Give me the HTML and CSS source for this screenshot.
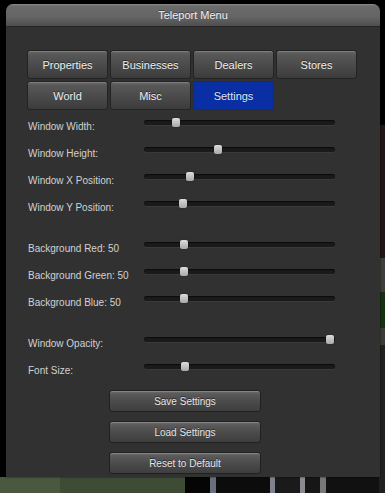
FILE: index.html
```html
<!DOCTYPE html>
<html lang="en">
<head>
  <meta charset="UTF-8" />
  <title>Teleport Menu</title>
  <link rel="stylesheet" href="styles.css">
</head>
<body>
  <div class="window">
    <div class="titlebar">Teleport Menu</div>
    <div class="content">
      <div class="tabs">
        <div class="tab">Properties</div>
        <div class="tab">Businesses</div>
        <div class="tab">Dealers</div>
        <div class="tab">Stores</div>
        <div class="tab">World</div>
        <div class="tab">Misc</div>
        <div class="tab active">Settings</div>
      </div>

      <div class="settings">
        <div class="row"><span class="label">Window Width:</span><div class="track"><div class="thumb" style="left: 16.8%"></div></div></div>
        <div class="row"><span class="label">Window Height:</span><div class="track"><div class="thumb" style="left: 38.7%"></div></div></div>
        <div class="row"><span class="label">Window X Position:</span><div class="track"><div class="thumb" style="left: 24%"></div></div></div>
        <div class="row"><span class="label">Window Y Position:</span><div class="track"><div class="thumb" style="left: 20.4%"></div></div></div>
        <div class="spacer"></div>
        <div class="row"><span class="label">Background Red: 50</span><div class="track"><div class="thumb" style="left: 21%"></div></div></div>
        <div class="row"><span class="label">Background Green: 50</span><div class="track"><div class="thumb" style="left: 21%"></div></div></div>
        <div class="row"><span class="label">Background Blue: 50</span><div class="track"><div class="thumb" style="left: 21%"></div></div></div>
        <div class="spacer"></div>
        <div class="row"><span class="label">Window Opacity:</span><div class="track"><div class="thumb" style="left: 97.4%"></div></div></div>
        <div class="row"><span class="label">Font Size:</span><div class="track"><div class="thumb" style="left: 21.5%"></div></div></div>
      </div>

      <div class="actions">
        <div class="btn">Save Settings</div>
        <div class="btn">Load Settings</div>
        <div class="btn">Reset to Default</div>
      </div>
    </div>
  </div>
</body>
</html>
```

FILE: styles.css
```css
body {
  margin: 0;
  width: 385px;
  height: 493px;
  overflow: hidden;
  font-family: 'Liberation Sans', Arial, sans-serif;
  background-color: #000;
  background-image:
    linear-gradient(to bottom, #000 0 125px, #241414 125px 258px, #3e3e3a 258px 292px, #143010 292px 328px, #3c3c36 328px 345px, #202020 345px),
    linear-gradient(to right, #4a5840 0 60px, #3e4c36 60px 185px, #050505 185px 210px, #6a6f7c 210px 216px, #0c0c0c 216px 270px, #7d828e 270px 275px, #1a1a1a 275px 300px, #8a8a90 300px 305px, #161616 305px 320px, #777 320px 326px, #111 326px);
  background-size: 6px 493px, 385px 16px;
  background-position: right top, left bottom;
  background-repeat: no-repeat;
}
.window {
  margin: 4px 0 0 6px;
  width: 374px;
  height: 473px;
  background: #313131;
  border-radius: 8px 8px 0 0;
  box-shadow: 0 0 2px rgba(0,0,0,0.8);
}
.titlebar {
  height: 22px;
  line-height: 23px;
  text-align: center;
  font-size: 11px;
  color: #f0f0f0;
  border-radius: 7px 7px 0 0;
  background: linear-gradient(to bottom, #8a8a8a 0, #6b6b6b 2px, #646464 60%, #4e4e4e 100%);
  border-bottom: 1px solid #262626;
  text-shadow: 0 -1px 0 rgba(0,0,0,0.4);
}
.content {
  padding: 23px 0 0 21px;
}
.tabs {
  display: grid;
  grid-template-columns: repeat(4, 81px);
  grid-auto-rows: 29px;
  gap: 2px;
}
.tab {
  display: flex;
  align-items: center;
  justify-content: center;
  font-size: 11px;
  color: #eee;
  border-radius: 3px;
  border: 1px solid #232323;
  background: linear-gradient(to bottom, #6a6a6a 0, #585858 12%, #4a4a4a 55%, #3c3c3c 100%);
  box-shadow: inset 0 1px 0 rgba(255,255,255,0.15);
  text-shadow: 0 -1px 0 rgba(0,0,0,0.5);
}
.tab.active {
  background: #0a2fa4;
  border-color: #0a2a90;
  border-radius: 0;
  box-shadow: none;
  color: #dfe8ff;
}
.settings {
  margin-top: -1px;
}
.row {
  display: flex;
  align-items: center;
  height: 27px;
}
.label {
  width: 116px;
  padding: 8px 0 0 1px;
  font-size: 10px;
  color: #d2d2d2;
  white-space: nowrap;
}
.track {
  position: relative;
  width: 191px;
  height: 5px;
  border-radius: 3px;
  background: #1a1a1a;
  box-shadow: inset 0 1px 1px rgba(0,0,0,0.6), 0 1px 0 rgba(255,255,255,0.04);
}
.thumb {
  position: absolute;
  top: -2px;
  width: 8px;
  height: 9px;
  transform: translateX(-50%);
  border-radius: 2px;
  background: linear-gradient(to bottom, #dcdcdc, #a8a8a8);
  box-shadow: 0 0 1px rgba(0,0,0,0.8);
}
.spacer {
  height: 14px;
}
.actions {
  display: flex;
  flex-direction: column;
  gap: 9px;
  margin: 10px 0 0 82px;
  width: 152px;
}
.btn {
  height: 22px;
  display: flex;
  align-items: center;
  justify-content: center;
  font-size: 10px;
  color: #e6e6e6;
  border-radius: 3px;
  border: 1px solid #202020;
  box-sizing: border-box;
  background: linear-gradient(to bottom, #6e6e6e 0, #5a5a5a 15%, #4a4a4a 55%, #3e3e3e 100%);
  box-shadow: inset 0 1px 0 rgba(255,255,255,0.18);
  text-shadow: 0 -1px 0 rgba(0,0,0,0.5);
}
```
